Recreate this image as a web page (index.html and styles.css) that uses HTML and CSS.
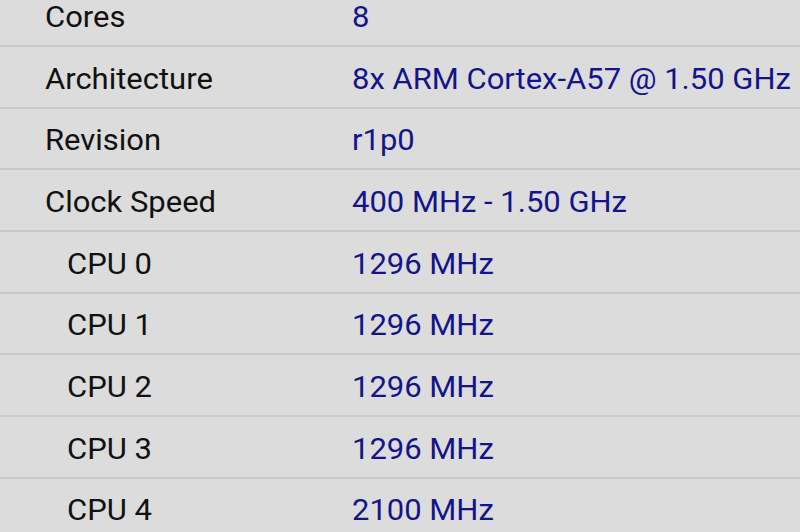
FILE: index.html
```html
<!DOCTYPE html>
<html>
<head>
<meta charset="utf-8">
<link rel="stylesheet" href="styles.css">
</head>
<body>
<div class="list">
  <div class="row"><span class="label">Cores</span><span class="value">8</span></div>
  <div class="row"><span class="label">Architecture</span><span class="value">8x ARM Cortex-A57 @ 1.50 GHz</span></div>
  <div class="row"><span class="label">Revision</span><span class="value">r1p0</span></div>
  <div class="row"><span class="label">Clock Speed</span><span class="value">400 MHz - 1.50 GHz</span></div>
  <div class="row sub"><span class="label">CPU 0</span><span class="value">1296 MHz</span></div>
  <div class="row sub"><span class="label">CPU 1</span><span class="value">1296 MHz</span></div>
  <div class="row sub"><span class="label">CPU 2</span><span class="value">1296 MHz</span></div>
  <div class="row sub"><span class="label">CPU 3</span><span class="value">1296 MHz</span></div>
  <div class="row sub"><span class="label">CPU 4</span><span class="value">2100 MHz</span></div>
</div>
</body>
</html>
```
FILE: styles.css
```css
html, body {
  margin: 0;
  padding: 0;
  background: #dcdcdc;
  overflow: hidden;
}
body {
  width: 800px;
  height: 532px;
  font-family: Roboto, "Liberation Sans", sans-serif;
}
.list {
  margin-top: -14.7px;
}
.row {
  box-sizing: border-box;
  height: 61.7px;
  border-bottom: 2px solid #c9c9c9;
  display: grid;
  grid-template-columns: 352px 1fr;
  align-items: start;
  padding-top: 14.6px;
  font-size: 29px;
  line-height: 34px;
  white-space: nowrap;
}
.label,
.value {
  display: inline-block;
  transform: scaleX(1.068);
  transform-origin: left center;
}
.label {
  margin-left: 45px;
  color: #111111;
}
.sub .label {
  margin-left: 67px;
}
.value {
  color: #14148a;
}
```
